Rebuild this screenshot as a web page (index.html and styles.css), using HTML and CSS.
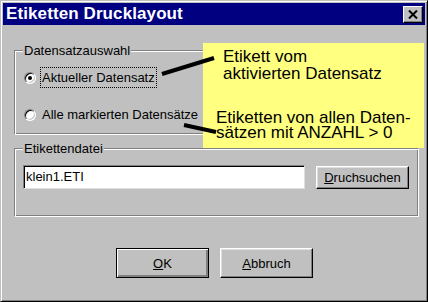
FILE: index.html
```html
<!DOCTYPE html>
<html lang="de">
<head>
    <meta charset="UTF-8">
    <title>Etiketten Drucklayout</title>
    <link rel="stylesheet" href="styles.css">
</head>
<body>
    <div class="window">
        <div class="titlebar">
            <span class="title">Etiketten Drucklayout</span>
            <button class="close" type="button">
                <svg width="10" height="9" viewBox="0 0 10 9">
                    <path d="M1 0.5 L9 8.5 M9 0.5 L1 8.5" stroke="#000" stroke-width="2" fill="none"/>
                </svg>
            </button>
        </div>

        <div class="dialog">
            <fieldset class="group group-source">
                <legend>Datensatzauswahl</legend>
                <label class="option">
                    <span class="radio checked"></span>
                    <span class="option-text focused">Aktueller Datensatz</span>
                </label>
                <label class="option">
                    <span class="radio"></span>
                    <span class="option-text">Alle markierten Datensätze</span>
                </label>
            </fieldset>

            <fieldset class="group group-file">
                <legend>Etikettendatei</legend>
                <div class="file-row">
                    <div class="field">klein1.ETI</div>
                    <button class="btn btn-browse" type="button"><u>D</u>ruchsuchen</button>
                </div>
            </fieldset>

            <div class="actions">
                <button class="btn btn-default" type="button"><u>O</u>K</button>
                <button class="btn" type="button"><u>A</u>bbruch</button>
            </div>
        </div>

        <!-- annotation note pasted over the dialog -->
        <div class="note">
            <p class="note-top">Etikett vom<br>aktivierten Datensatz</p>
            <p class="note-bottom">Etiketten von allen Daten-<br>sätzen mit ANZAHL &gt; 0</p>
        </div>
        <svg class="pointers" width="428" height="302" viewBox="0 0 428 302">
            <line x1="161" y1="73" x2="213" y2="57" stroke="#000" stroke-width="4"/>
            <line x1="183" y1="124" x2="215" y2="131" stroke="#000" stroke-width="4"/>
        </svg>
    </div>
</body>
</html>
```

FILE: styles.css
```css
/* General */
body {
    margin: 0;
    background-color: #c0c0c0;
    font-family: "Liberation Sans", Arial, sans-serif;
    font-size: 13px;
    color: #000;
}

/* Window frame, win95 style */
.window {
    position: relative;
    box-sizing: border-box;
    width: 428px;
    height: 302px;
    padding: 1px;
    background-color: #c0c0c0;
    border: 1px solid;
    border-color: #c0c0c0 #000 #000 #c0c0c0;
    box-shadow: inset 1px 1px 0 #fff, inset -1px -1px 0 #808080;
}

.titlebar {
    display: flex;
    align-items: center;
    justify-content: space-between;
    height: 22px;
    margin: 1px;
    padding: 0 2px 0 3px;
    background-color: #000080;
}

.title {
    color: #fff;
    font-weight: bold;
    font-size: 17px;
    letter-spacing: 0.1px;
}

.close {
    display: flex;
    align-items: center;
    justify-content: center;
    box-sizing: border-box;
    width: 20px;
    height: 17px;
    padding: 0;
    background-color: #c0c0c0;
    border: 1px solid;
    border-color: #fff #000 #000 #fff;
    box-shadow: inset -1px -1px 0 #808080;
}

/* Dialog body */
.dialog {
    padding: 17px 0 0 12px;
}

.group {
    box-sizing: border-box;
    width: 405px;
    margin: 0;
    padding: 0 8px 0 8px;
    border: 1px solid;
    border-color: #808080 #fff #fff #808080;
    box-shadow: inset 1px 1px 0 #fff, inset -1px -1px 0 #808080;
}

.group legend {
    padding: 0 1px;
    margin-left: 0;
    line-height: 15px;
    background-color: #c0c0c0;
}

.group-source {
    height: 92px;
    padding-top: 9px;
}

.group-file {
    height: 76px;
    margin-top: 6px;
    padding-top: 9px;
}

/* Radio options */
.option {
    display: flex;
    align-items: center;
    gap: 4px;
    height: 21px;
    margin-bottom: 16px;
}

.radio {
    position: relative;
    box-sizing: border-box;
    width: 12px;
    height: 12px;
    margin-left: 1px;
    border-radius: 50%;
    background-color: #fff;
    border: 1px solid;
    border-color: #808080 #fff #fff #808080;
    box-shadow: inset 1px 1px 0 #000, inset -1px -1px 0 #c0c0c0;
}

.radio.checked::after {
    content: "";
    position: absolute;
    left: 3px;
    top: 3px;
    width: 4px;
    height: 4px;
    border-radius: 50%;
    background-color: #000;
}

.option-text {
    padding: 2px 1px;
    line-height: 15px;
    border: 1px dotted transparent;
}

.option-text.focused {
    border-color: #000;
}

/* File row */
.file-row {
    display: flex;
    align-items: center;
    gap: 11px;
}

.field {
    box-sizing: border-box;
    width: 282px;
    height: 24px;
    padding: 3px 2px;
    line-height: 16px;
    background-color: #fff;
    border: 1px solid;
    border-color: #808080 #dfdfdf #dfdfdf #808080;
    box-shadow: inset 1px 1px 0 #000;
}

/* Buttons */
.btn {
    box-sizing: border-box;
    height: 23px;
    padding: 0;
    font-family: inherit;
    font-size: 13px;
    color: #000;
    background-color: #c0c0c0;
    border: 1px solid;
    border-color: #fff #000 #000 #fff;
    box-shadow: inset -1px -1px 0 #808080, inset 1px 1px 0 #dfdfdf;
}

.btn-browse {
    width: 93px;
}

.actions {
    display: flex;
    justify-content: center;
    gap: 11px;
    margin-top: 31px;
    padding-right: 11px;
}

.actions .btn {
    width: 93px;
    height: 30px;
}

.actions .btn-default {
    border: 1px solid #000;
    box-shadow: inset 1px 1px 0 #fff, inset -2px -2px 0 #808080;
}

/* Yellow annotation note */
.note {
    position: absolute;
    left: 202px;
    top: 42px;
    width: 221px;
    height: 105px;
    background-color: #ffff80;
    font-size: 17px;
}

.note p {
    margin: 0;
    text-align: left;
}

.note-top {
    padding: 5px 0 0 20px;
    line-height: 17px;
}

.note-bottom {
    padding: 28px 0 0 13px;
    line-height: 15px;
}

.pointers {
    position: absolute;
    left: 0;
    top: 0;
    pointer-events: none;
}
```
